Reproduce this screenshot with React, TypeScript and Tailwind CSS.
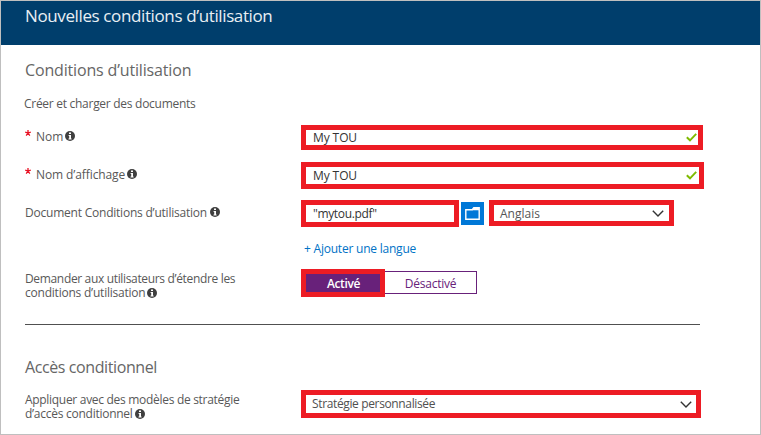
import type { ReactNode } from "react";

function InfoIcon({ className = "" }: { className?: string }) {
  return (
    <svg className={`h-[10px] w-[10px] shrink-0 ${className}`} viewBox="0 0 10 10">
      <circle cx="5" cy="5" r="5" fill="#3f3f3f" />
      <path d="M4 1.5h2v1.6H4zM3.6 4H6v3.4h.6v1H3.5v-1h.7V5h-.6z" fill="#fff" />
    </svg>
  );
}

function Check() {
  return (
    <svg className="h-[9px] w-[11px]" viewBox="0 0 11 9" fill="none">
      <path d="M0.8 4.2 L4 7.3 L10.2 0.8" stroke="#7fba00" strokeWidth="1.9" />
    </svg>
  );
}

function Chevron() {
  return (
    <svg className="h-[7px] w-[12px]" viewBox="0 0 12 7" fill="none">
      <path d="M0.8 0.8 L6 6 L11.2 0.8" stroke="#333" strokeWidth="1.4" />
    </svg>
  );
}

function Star() {
  return (
    <svg className="mr-[5px] h-[6px] w-[6px]" viewBox="0 0 6 6" fill="none">
      <path d="M3 0v3M0.2 2.1 3 3M5.8 2.1 3 3M1.2 5.6 3 3M4.8 5.6 3 3" stroke="#e81123" strokeWidth="1.3" />
    </svg>
  );
}

function Row({ className, label, children }: { className: string; label: ReactNode; children: ReactNode }) {
  return (
    <div className={`flex items-start ${className}`}>
      <div className="w-[276px] shrink-0">{label}</div>
      {children}
    </div>
  );
}

export default function App() {
  return (
    <div className="h-[435px] w-[761px] overflow-hidden border border-[#bfbfbf] bg-white font-['Open_Sans','Noto_Sans',sans-serif] text-[12px] leading-[14px] whitespace-nowrap text-[#585858]">
      <header className="h-[44px] bg-[#003e6c] pt-[4px] pl-[24px]">
        <h1 className="text-[17px] leading-[22px] tracking-[-0.38px] text-[#e9eff4]">Nouvelles conditions d’utilisation</h1>
      </header>
      <main className="pl-[24px]">
        <h2 className="h-[52px] pt-[15px] text-[16px] leading-[20px] tracking-[-0.16px] text-[#666]">
          Conditions d’utilisation
        </h2>
        <p className="-ml-px h-[28px] tracking-[-0.28px]">Créer et charger des documents</p>

        <Row
          className="h-[37px]"
          label={
            <div className="flex pt-[5px]">
              <Star />
              <span>Nom</span>
              <InfoIcon className="mt-[1px] ml-[2px]" />
            </div>
          }
        >
          <div className="flex h-[25px] w-[402px] items-center justify-between border-5 border-[#ed1c24] pr-px pl-[7px] text-[#333]">
            <span className="tracking-[-0.1px]">My TOU</span>
            <Check />
          </div>
        </Row>

        <Row
          className="h-[38px]"
          label={
            <div className="flex pt-[6px]">
              <Star />
              <span className="tracking-[-0.1px]">Nom d’affichage</span>
              <InfoIcon className="mt-[1px] ml-[2px]" />
            </div>
          }
        >
          <div className="flex h-[27px] w-[403px] items-center justify-between border-5 border-[#ed1c24] pr-[2px] pl-[7px] text-[#333]">
            <span className="tracking-[-0.1px]">My TOU</span>
            <Check />
          </div>
        </Row>

        <Row
          className="h-[42px]"
          label={
            <div className="flex pt-[6px]">
              <span className="tracking-[-0.22px]">Document Conditions d’utilisation</span>
              <InfoIcon className="mt-[1px] ml-[3px]" />
            </div>
          }
        >
          <div className="flex h-[27px] w-[158px] items-center border-5 border-[#ed1c24] pl-[7px] tracking-[-0.35px] text-[#333]">
            "mytou.pdf"
          </div>
          <div className="mt-[2px] ml-[2px] flex h-[23px] w-[23px] items-center justify-center bg-[#0078d7]">
            <svg className="h-[13px] w-[15px]" viewBox="0 0 15 13" fill="none">
              <path d="M0.8 2.8H7.2L8.8 0.8H14.2V12.2H0.8z" stroke="#fff" strokeWidth="1.4" />
              <path d="M7.2 3.2 8.8 0.8H14V3.2z" fill="#fff" />
            </svg>
          </div>
          <div className="ml-[5px] flex h-[26px] w-[185px] items-center justify-between border-5 border-[#ed1c24] pr-[5px] pl-[6px] text-[#555]">
            <span className="pt-[2px]">Anglais</span>
            <Chevron />
          </div>
        </Row>

        <Row className="h-[27px]" label={null}>
          <span className="pl-[3px] tracking-[-0.22px] text-[#0072c6]">+ Ajouter une langue</span>
        </Row>

        <Row
          className="h-[55px]"
          label={
            <div className="pt-[3px]">
              <p className="tracking-[-0.34px]">Demander aux utilisateurs d’étendre les</p>
              <div className="flex">
                <span className="tracking-[-0.22px]">conditions d’utilisation</span>
                <InfoIcon className="mt-[2px] ml-px" />
              </div>
            </div>
          }
        >
          <div className="flex h-[28px] w-[84px] items-center justify-center border-5 border-[#ed1c24] bg-[#68217a] pt-[2px] pl-px font-semibold tracking-[-0.4px] text-white">
            Activé
          </div>
          <div className="mt-[2px] flex h-[23px] w-[92px] items-center justify-center border border-l-0 border-[#68217a] pt-[2px] tracking-[-0.23px] text-[#68217a]">
            Désactivé
          </div>
        </Row>

        <hr className="h-px w-[675px] border-0 bg-[#505050]" />

        <h2 className="h-[65px] pt-[32px] text-[16px] leading-[20px] tracking-[-0.4px] text-[#666]">
          Accès conditionnel
        </h2>

        <Row
          className="h-[44px]"
          label={
            <div className="pt-[3px]">
              <p className="tracking-[-0.3px]">Appliquer avec des modèles de stratégie</p>
              <div className="flex">
                <span className="tracking-[-0.26px]">d’accès conditionnel</span>
                <InfoIcon className="mt-[2px] ml-[2px]" />
              </div>
            </div>
          }
        >
          <div className="flex h-[28px] w-[400px] items-center justify-between border-5 border-[#ed1c24] pr-[4px] pl-[6px] text-[#505050]">
            <span className="tracking-[-0.36px]">Stratégie personnalisée</span>
            <Chevron />
          </div>
        </Row>
      </main>
    </div>
  );
}
